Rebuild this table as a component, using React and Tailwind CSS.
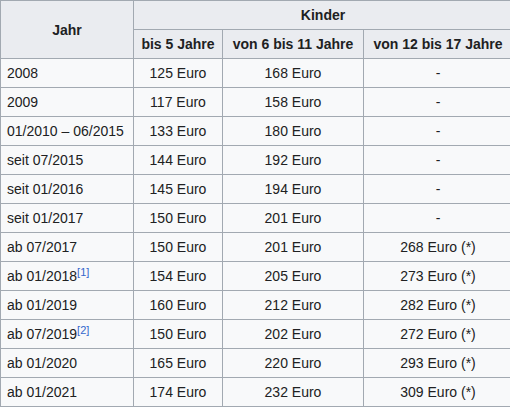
import React from 'react';

const rows = [
  { jahr: '2008', a: '125 Euro', b: '168 Euro', c: '-' },
  { jahr: '2009', a: '117 Euro', b: '158 Euro', c: '-' },
  { jahr: '01/2010 – 06/2015', a: '133 Euro', b: '180 Euro', c: '-' },
  { jahr: 'seit 07/2015', a: '144 Euro', b: '192 Euro', c: '-' },
  { jahr: 'seit 01/2016', a: '145 Euro', b: '194 Euro', c: '-' },
  { jahr: 'seit 01/2017', a: '150 Euro', b: '201 Euro', c: '-' },
  { jahr: 'ab 07/2017', a: '150 Euro', b: '201 Euro', c: '268 Euro (*)' },
  { jahr: 'ab 01/2018', note: '1', a: '154 Euro', b: '205 Euro', c: '273 Euro (*)' },
  { jahr: 'ab 01/2019', a: '160 Euro', b: '212 Euro', c: '282 Euro (*)' },
  { jahr: 'ab 07/2019', note: '2', a: '150 Euro', b: '202 Euro', c: '272 Euro (*)' },
  { jahr: 'ab 01/2020', a: '165 Euro', b: '220 Euro', c: '293 Euro (*)' },
  { jahr: 'ab 01/2021', a: '174 Euro', b: '232 Euro', c: '309 Euro (*)' },
];

const th = 'border border-[#a2a9b1] bg-[#eaecf0] px-[5px] py-[3px] text-center font-bold leading-[22px] whitespace-nowrap';
const td = 'border border-[#a2a9b1] bg-[#f8f9fa] px-[5px] py-[3px] leading-[22px] whitespace-nowrap';

export default function App() {
  return (
    <div className="w-[510px] h-[408px] overflow-hidden bg-white">
      <table
        className="table-fixed border-collapse w-[512px] text-[14px] text-[#202122]"
        style={{ fontFamily: '"Liberation Sans", Arial, sans-serif' }}
      >
        <colgroup>
          <col className="w-[133px]" />
          <col className="w-[89px]" />
          <col className="w-[141px]" />
          <col className="w-[149px]" />
        </colgroup>
        <thead>
          <tr>
            <th rowSpan={2} className={th}>Jahr</th>
            <th colSpan={3} className={th}>Kinder</th>
          </tr>
          <tr>
            <th className={th}>bis 5 Jahre</th>
            <th className={th}>von 6 bis 11 Jahre</th>
            <th className={th}>von 12 bis 17 Jahre</th>
          </tr>
        </thead>
        <tbody>
          {rows.map((r) => (
            <tr key={r.jahr}>
              <td className={`${td} text-left pl-[6px]`}>
                {r.jahr}
                {r.note && (
                  <sup className="text-[11px] leading-none text-[#3366cc]">[{r.note}]</sup>
                )}
              </td>
              <td className={`${td} text-center`}>{r.a}</td>
              <td className={`${td} text-center`}>{r.b}</td>
              <td className={`${td} text-center`}>{r.c}</td>
            </tr>
          ))}
        </tbody>
      </table>
    </div>
  );
}
